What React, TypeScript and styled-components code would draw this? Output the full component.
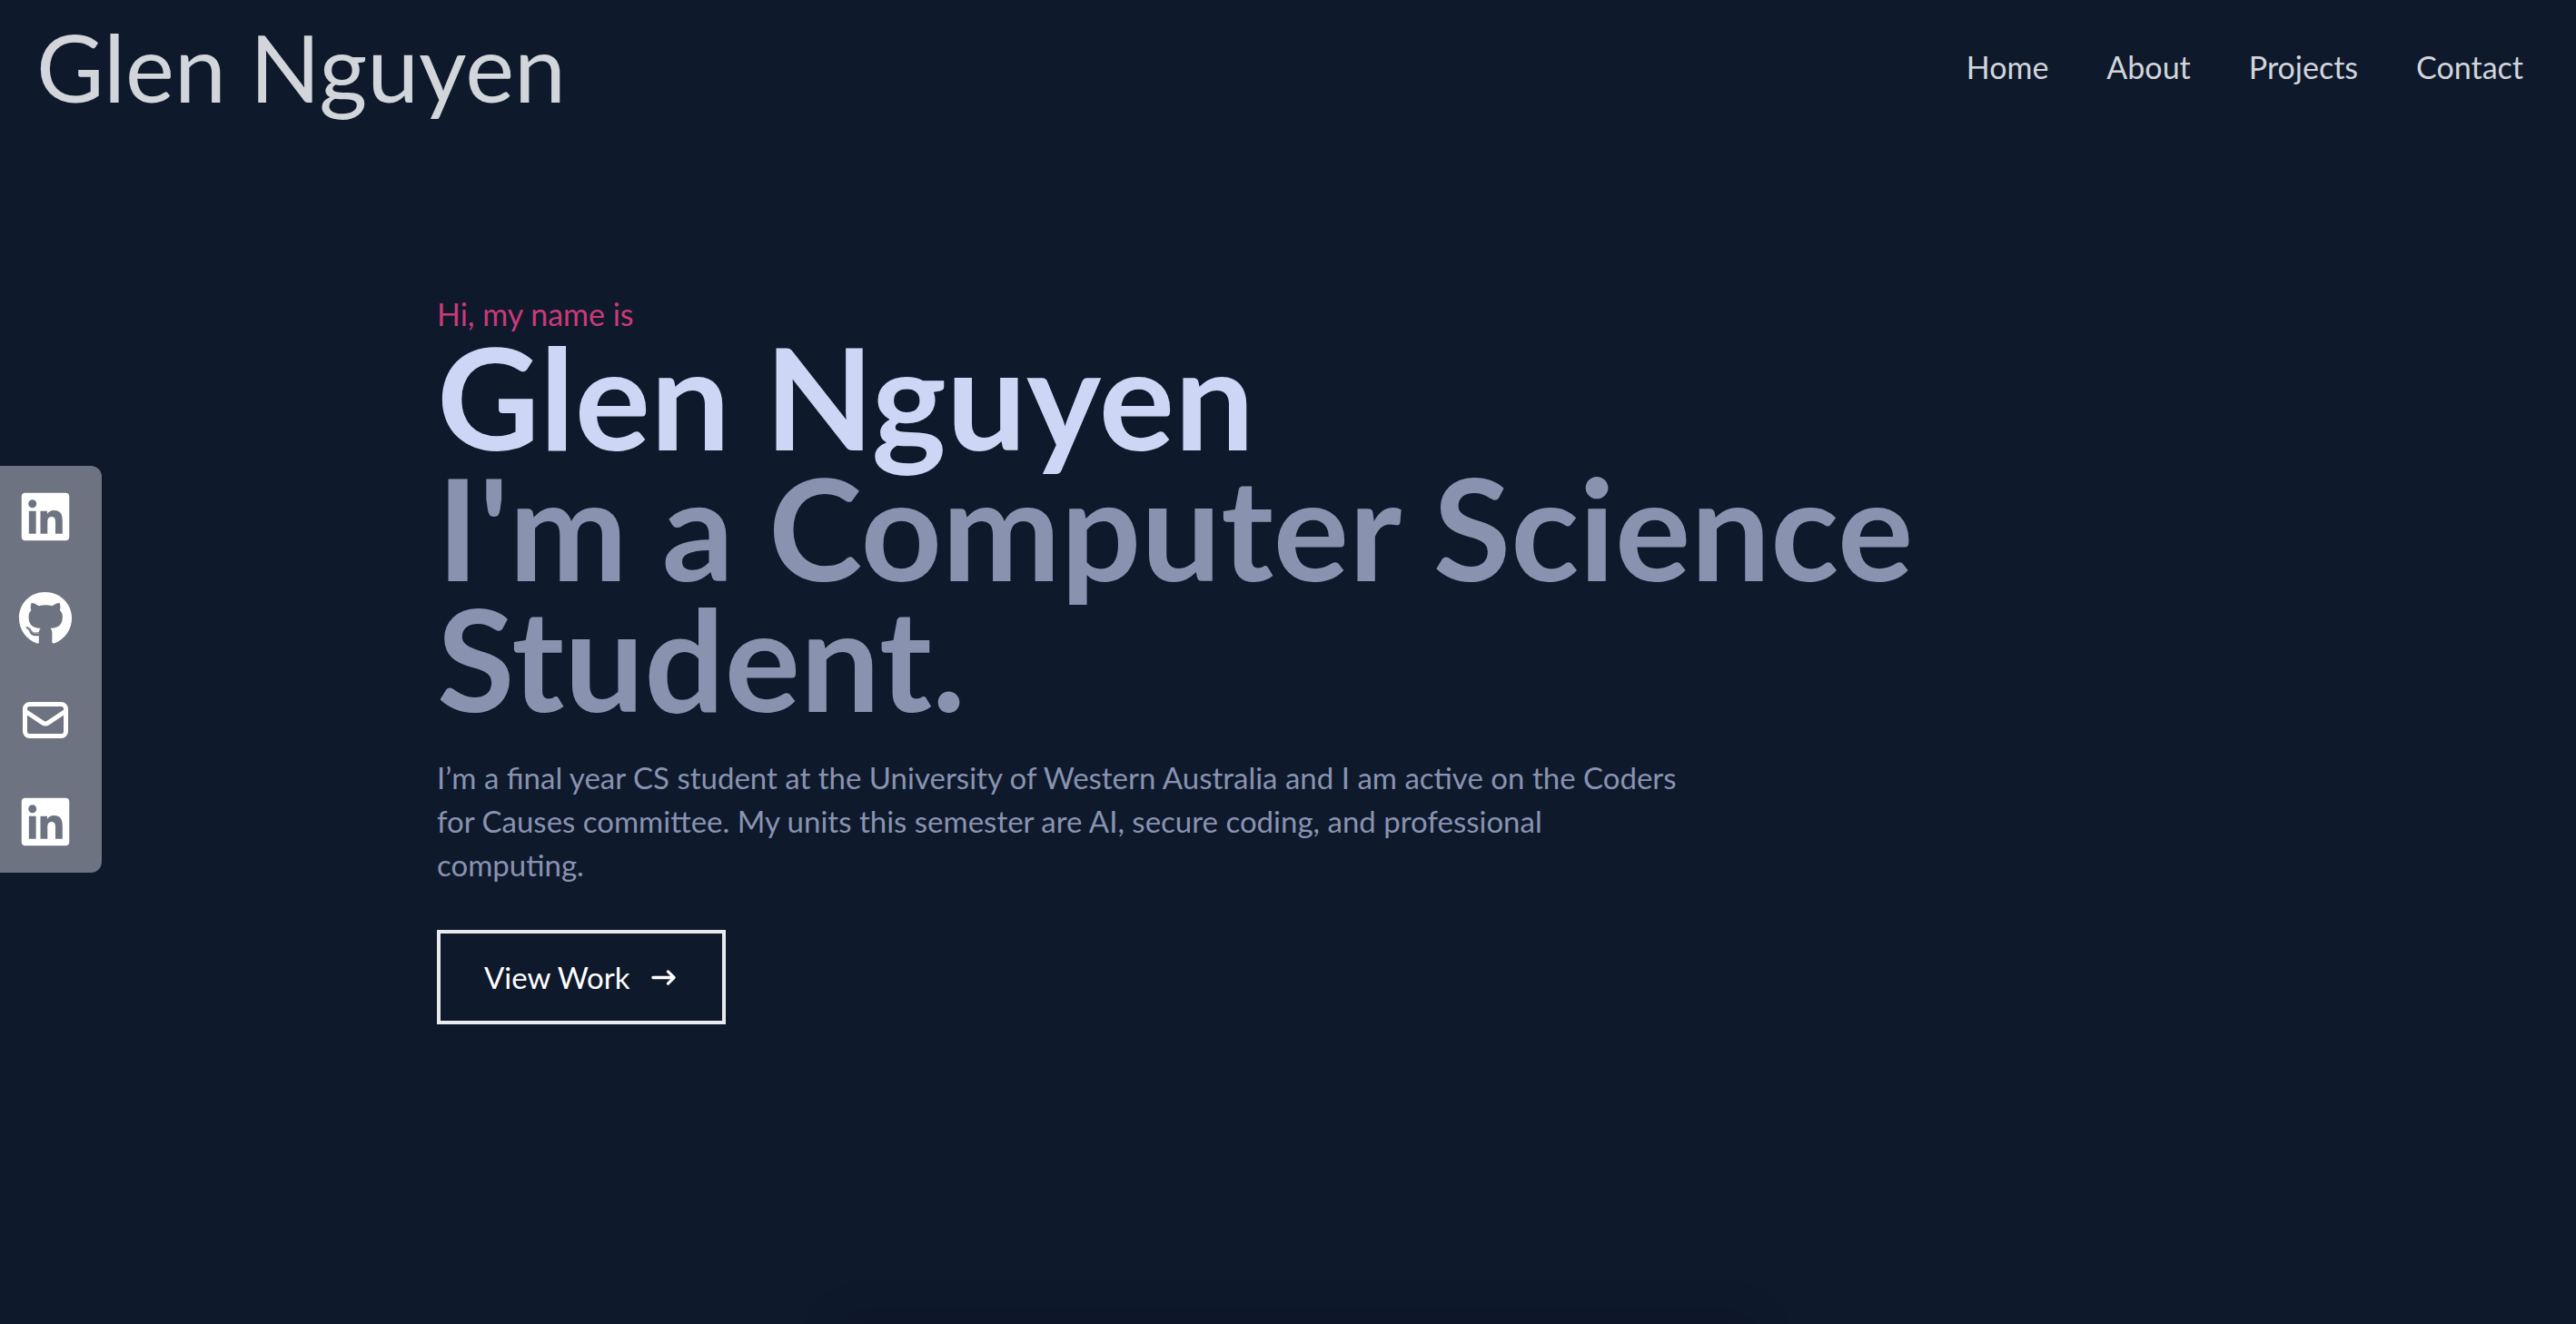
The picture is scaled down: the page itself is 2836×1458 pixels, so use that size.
import React from "react";
import styled, { createGlobalStyle } from "styled-components";
import { FaGithub, FaLinkedin } from "react-icons/fa";
import { HiArrowNarrowRight, HiOutlineMail } from "react-icons/hi";

const GlobalStyle = createGlobalStyle`
  *, *::before, *::after { box-sizing: border-box; }
  body {
    margin: 0;
    background: #0e192c;
    font-family: Lato, "Open Sans", sans-serif;
    font-size: 33px;
    line-height: 48px;
  }
  h1, h2, p, ul { margin: 0; padding: 0; }
  ul { list-style: none; }
  a { color: inherit; text-decoration: none; }
`;

const Page = styled.div`
  position: relative;
  min-height: 100vh;
  display: flex;
  flex-direction: column;
  overflow: hidden;

  &::after {
    content: "";
    position: absolute;
    top: 100%;
    left: 50%;
    width: 1000px;
    height: 200px;
    margin-left: -490px;
    box-shadow: 0 0 48px rgba(0, 0, 0, 0.2);
  }
`;

const Header = styled.header`
  height: 148px;
  padding: 0 26px 0 40px;
  display: flex;
  align-items: center;
  justify-content: space-between;
  color: #d2d5da;
`;

const Brand = styled.a`
  font-size: 102px;
  line-height: 96px;
`;

const Menu = styled.ul`
  display: flex;
  font-size: 34px;
  li { padding: 0 32px; }
`;

const Hero = styled.main`
  width: 100%;
  max-width: 2000px;
  margin: 0 auto;
  padding: 180px 63px 0;
  display: flex;
  flex-direction: column;
  align-items: flex-start;
`;

const Greeting = styled.p`
  font-size: 34px;
  line-height: 36px;
  color: #ca3a78;
`;

const Name = styled.h1`
  font-size: 156px;
  line-height: 144px;
  font-weight: 700;
  color: #cdd6f4;
`;

const Role = styled(Name).attrs({ as: "h2" })`
  color: #8993b0;
`;

const Bio = styled.p`
  max-width: 1368px;
  padding: 36px 0 32px;
  color: #8993b0;
`;

const WorkButton = styled.button`
  display: flex;
  align-items: center;
  gap: 20px;
  margin: 16px 0;
  padding: 24px 48px;
  border: 4px solid #e8eaed;
  background: transparent;
  color: #fff;
  font: inherit;
`;

const Social = styled.nav`
  position: fixed;
  left: 0;
  top: 513px;
  width: 112px;
  border-radius: 0 12px 12px 0;
  background: #6d7380;
  a {
    display: flex;
    align-items: center;
    height: 112px;
    padding-left: 20px;
    color: #fff;
    font-size: 60px;
  }
`;

const socials = [
  { name: "LinkedIn", Icon: FaLinkedin },
  { name: "GitHub", Icon: FaGithub },
  { name: "Email", Icon: HiOutlineMail },
  { name: "LinkedIn profile", Icon: FaLinkedin },
];

export default function App() {
  return (
    <Page>
      <GlobalStyle />
      <Header>
        <Brand href="#home">Glen Nguyen</Brand>
        <nav aria-label="Main">
          <Menu>
            {["Home", "About", "Projects", "Contact"].map((item) => (
              <li key={item}>
                <a href={`#${item.toLowerCase()}`}>{item}</a>
              </li>
            ))}
          </Menu>
        </nav>
      </Header>
      <Hero id="home">
        <Greeting>Hi, my name is</Greeting>
        <Name>Glen Nguyen</Name>
        <Role>I'm a Computer Science Student.</Role>
        <Bio>
          I’m a final year CS student at the University of Western Australia and I am active on the Coders
          for Causes committee. My units this semester are AI, secure coding, and professional computing.
        </Bio>
        <WorkButton type="button">
          View Work
          <HiArrowNarrowRight />
        </WorkButton>
      </Hero>
      <Social aria-label="Social links">
        <ul>
          {socials.map(({ name, Icon }) => (
            <li key={name}>
              <a href="#contact" aria-label={name}>
                <Icon />
              </a>
            </li>
          ))}
        </ul>
      </Social>
    </Page>
  );
}
